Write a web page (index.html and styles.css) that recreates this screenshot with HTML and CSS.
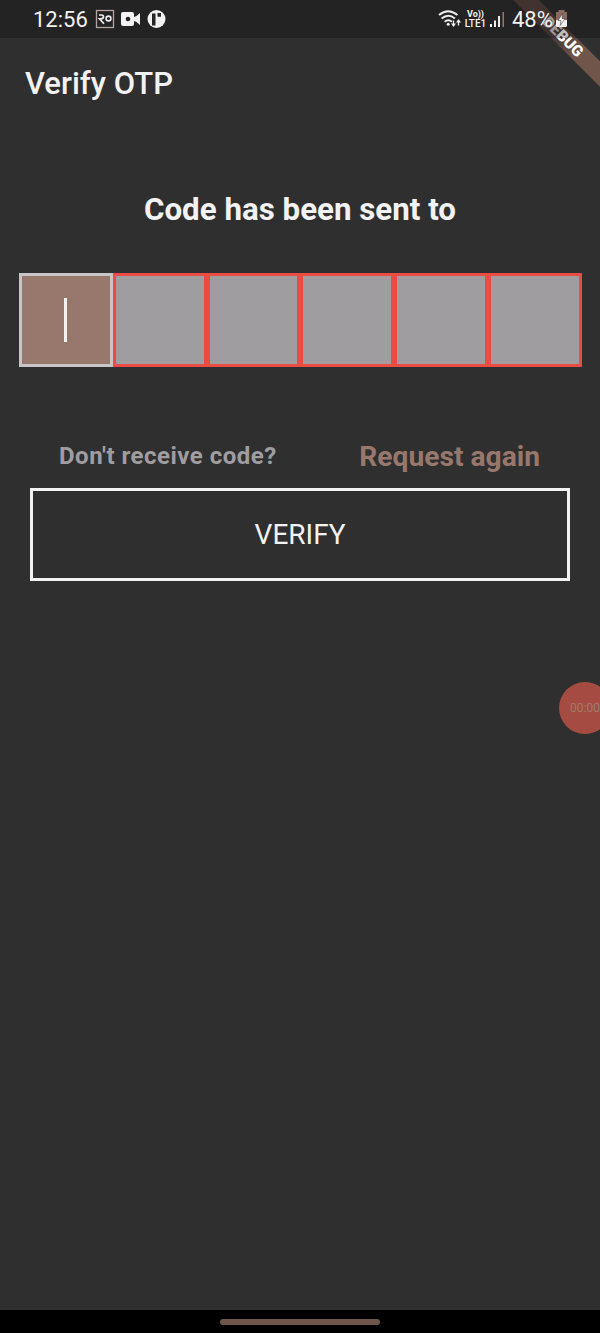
FILE: index.html
```html
<!DOCTYPE html>
<html lang="en">
<head>
<meta charset="utf-8">
<title>Verify OTP</title>
<link rel="stylesheet" href="styles.css">
</head>
<body>
<div class="screen">
  <header class="status">
    <span class="clock">12:56</span>
    <svg class="notices" width="72" height="20" viewBox="0 0 72 20">
      <rect x="1.500" y="1.500" width="17" height="17" fill="none" stroke="#b3a5a0" stroke-width="1.3"/>
      <path d="M4 6h2.500c3 0 2.500 3.800-.5 3.800H4.500l4.500 5" fill="none" stroke="#eee" stroke-width="1.700"/>
      <circle cx="13.500" cy="9.500" r="2.400" fill="none" stroke="#eee" stroke-width="1.600"/>
      <path d="M28 3h9q2 0 2 2v3l2.500-1 3.500-3v12l-3.500-3-2.500-1v3q0 2-2 2h-9q-2 0-2-2V5q0-2 2-2z" fill="#f3f2f2"/>
      <circle cx="33" cy="10" r="2.300" fill="#222"/>
      <circle cx="61.500" cy="10" r="9" fill="#f3f2f2"/>
      <path d="M57 4.500h3.500v12H57zM62.500 4h3.500v3.800h-3.500z" fill="#252525"/>
    </svg>
    <svg class="wifi" width="24" height="20" viewBox="0 0 24 20" fill="none" stroke="#eeeded" stroke-width="1.900">
      <path d="M1 6q9-7.500 18.500 0M3.600 9.500q6.700-5.500 13.300 0M6.600 12.800q3.700-3 7.400 0"/>
      <circle cx="10.200" cy="15.200" r="1.500" fill="#eee" stroke="none"/>
      <path d="M15.500 11.500v5M20.500 16.500v-5" stroke-width="1.300"/>
      <path d="M13 14.500h5l-2.500 3.500zM18 13.500h5L20.500 10z" fill="#eee" stroke="none"/>
    </svg>
    <span class="volte"><span>Vo))</span><span class="lte">LTE1</span></span>
    <svg class="signal" width="16" height="18" viewBox="0 0 16 18">
      <path d="M0 14h2v3H0zM4 10.500h2V17H4zM8 6h2v11H8z" fill="#eeeded"/>
      <path d="M12.500 2h1.500v15h-1.500z" fill="#98776d"/>
    </svg>
    <span class="percent">48%</span>
    <svg class="battery" width="13" height="18" viewBox="0 0 13 18">
      <path d="M3.500 0h6v2h2.500v8H1V2h2.500z" fill="#8b6a60"/>
      <path d="M1 10h11v5.500q0 1.500-1.500 1.500h-8Q1 17 1 15.500z" fill="#f0eeee"/>
      <path d="M7.500 3.500L3 10.500h3l-.8 5 4.800-7H7z" fill="#fff" stroke="#252525" stroke-width=".5"/>
    </svg>
  </header>
  <main class="content">
    <h1 class="title">Verify OTP</h1>
    <h2 class="heading">Code has been sent to</h2>
    <div class="codes">
      <div class="cell active"><span class="caret"></span></div>
      <div class="cell"></div>
      <div class="cell"></div>
      <div class="cell"></div>
      <div class="cell"></div>
      <div class="cell"></div>
    </div>
    <div class="resend">
      <span class="question">Don't receive code?</span>
      <a class="again">Request again</a>
    </div>
    <button class="verify">VERIFY</button>
  </main>
  <footer class="navbar"><span class="handle"></span></footer>
  <div class="recorder">00:00</div>
  <div class="banner"><span class="ribbon"><span class="shaded">DE</span>BUG</span></div>
</div>
</body>
</html>
```
FILE: styles.css
```css
* { box-sizing: border-box; }
body { margin: 0; font-family: Roboto, sans-serif; background: #2f2f2f; }
.screen {
  position: relative;
  width: 600px;
  height: 1333px;
  overflow: hidden;
  display: flex;
  flex-direction: column;
  background: #2f2f2f;
  color: #f3f2f2;
}
.status {
  position: relative;
  z-index: 2;
  height: 38px;
  flex: none;
  display: flex;
  align-items: center;
  padding-left: 33px;
  background: rgba(0, 0, 0, .25);
}
.clock { width: 62px; font-size: 22px; line-height: 38px; padding-top: 1px; }
.notices { flex: none; }
.wifi { margin-left: 271px; flex: none; }
.volte {
  width: 23px;
  margin-left: 2px;
  display: flex;
  flex-direction: column;
  align-items: center;
  font-size: 9px;
  line-height: 10px;
  font-weight: 700;
}
.lte { font-size: 10px; font-weight: 500; }
.signal { margin-left: 3px; flex: none; }
.percent { width: 43px; margin-left: 6px; font-size: 22px; line-height: 38px; padding-top: 1px; }
.battery { flex: none; }
.content { flex: 1; display: flex; flex-direction: column; }
.title {
  margin: 26px 0 0 25px;
  font-size: 31px;
  line-height: 40px;
  font-weight: 500;
}
.heading {
  margin: 86px 0 0;
  text-align: center;
  font-size: 31.3px;
  line-height: 40px;
  font-weight: 700;
}
.codes { display: flex; margin: 43px 18px 0 19px; height: 94px; }
.cell { flex: 1; border: 3px solid #ea4b43; background: #a09da0; }
.cell.active {
  display: flex;
  align-items: center;
  justify-content: center;
  border-color: #c8c5c7;
  background: #98776d;
}
.caret { width: 3px; height: 44px; background: #f3f2f2; }
.resend {
  display: flex;
  justify-content: space-between;
  align-items: center;
  height: 40px;
  margin: 69px 60px 0 59px;
  font-weight: 700;
}
.question { font-size: 24px; letter-spacing: .5px; color: #a09da0; }
.again { font-size: 28.200px; color: #98776d; }
.verify {
  height: 93px;
  margin: 12px 30px 0;
  padding: 0;
  border: 3px solid #f3f2f2;
  background: transparent;
  color: #f3f2f2;
  font: 400 28px Roboto, sans-serif;
}
.navbar {
  height: 23px;
  flex: none;
  display: flex;
  justify-content: center;
  align-items: center;
  background: #000;
}
.handle { width: 160px; height: 6px; border-radius: 3px; background: #70554b; }
.recorder {
  position: absolute;
  left: 559px;
  top: 682px;
  width: 52px;
  height: 52px;
  border-radius: 50%;
  background: #a64b42;
  color: #a17a70;
  font-size: 12px;
  line-height: 52px;
  text-align: center;
}
.banner {
  position: absolute;
  z-index: 1;
  top: 0;
  right: 0;
  width: 100px;
  height: 100px;
  overflow: hidden;
}
.ribbon {
  position: absolute;
  left: -17px;
  top: 28px;
  width: 160px;
  height: 18px;
  transform: rotate(45deg);
  background: linear-gradient(90deg, #59443e 0, #59443e 35%, #4c3d38 48%, #70554b 64%);
  color: #fff;
  text-align: center;
  font-size: 15.500px;
  line-height: 18px;
  font-weight: 900;
}
.shaded { color: #d5ccca; }
```
